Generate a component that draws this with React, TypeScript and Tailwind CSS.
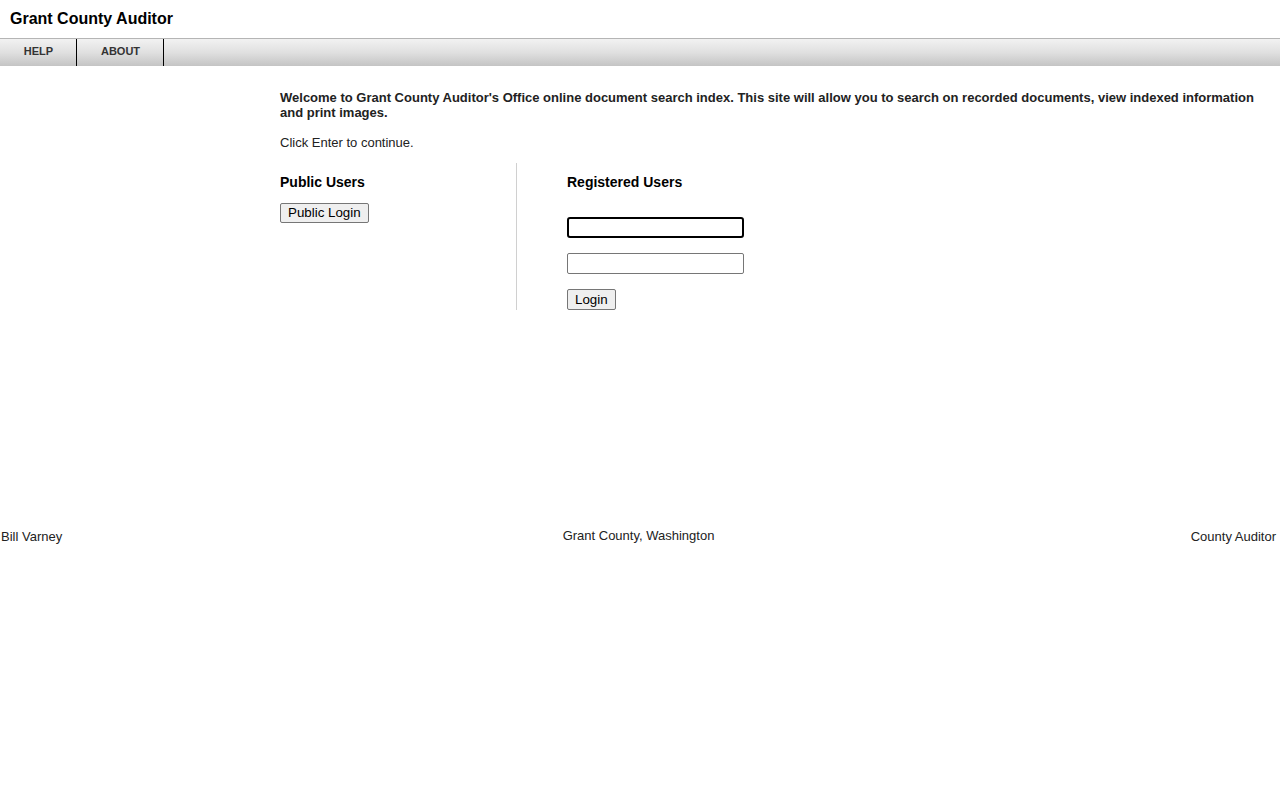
export default function App() {
  return (
    <div className="min-h-[800px] bg-white font-['Liberation_Sans',Arial,sans-serif] text-[#222]">
      <header className="h-[38px] pl-[10px] pt-[9px]">
        <h1 className="text-[16px] leading-[19px] font-bold text-black">Grant County Auditor</h1>
      </header>

      <nav className="flex h-[28px] border-t border-[#b5b5b5] bg-gradient-to-b from-[#f2f2f2] via-[#e0e0e0] to-[#c4c4c4]">
        <a className="flex w-[77px] items-center justify-center border-r border-black pb-[2px] pl-[1px] text-[11px] font-bold text-[#333]">
          HELP
        </a>
        <a className="flex w-[87px] items-center justify-center border-r border-black pb-[2px] pl-[1px] text-[11px] font-bold text-[#333]">
          ABOUT
        </a>
      </nav>

      <main className="pl-[280px] pr-[16px] pt-[24px]">
        <p className="text-[13px] leading-[15px] font-bold">
          Welcome to Grant County Auditor's Office online document search index. This site will allow you to search on recorded documents, view indexed information and print images.
        </p>
        <p className="mt-[15px] text-[13px] leading-[15px]">Click Enter to continue.</p>

        <div className="mt-[13px] flex">
          <section className="h-[147px] w-[237px] border-r border-[#d0d0d0] pt-[11px]">
            <h2 className="text-[14px] leading-[16px] font-bold text-black">Public Users</h2>
            <button className="mt-[13px] h-[20px] rounded-[2px] border border-[#767676] bg-[#efefef] px-[7px] text-[13.33px] leading-[16px] text-black">
              Public Login
            </button>
          </section>

          <section className="pl-[50px] pt-[11px]">
            <h2 className="text-[14px] leading-[16px] font-bold text-black">Registered Users</h2>
            <div className="mt-[27px] flex flex-col items-start">
              <input
                type="text"
                className="h-[21px] w-[177px] rounded-[3px] border-2 border-black bg-white px-1 text-[13px] outline-none"
              />
              <input
                type="password"
                className="mt-[15px] h-[21px] w-[177px] rounded-[2px] border border-[#767676] bg-white px-1 text-[13px] outline-none"
              />
              <button className="mt-[15px] h-[21px] rounded-[2px] border border-[#767676] bg-[#efefef] px-[7px] text-[13.33px] leading-[16px] text-black">
                Login
              </button>
            </div>
          </section>
        </div>
      </main>

      <footer className="mt-[218px] grid grid-cols-3 items-start pl-[1px] pr-[4px] text-[13px] leading-[15px]">
        <span className="mt-[1px]">Bill Varney</span>
        <span className="text-center">Grant County, Washington</span>
        <span className="mt-[1px] text-right">County Auditor</span>
      </footer>
    </div>
  );
}
